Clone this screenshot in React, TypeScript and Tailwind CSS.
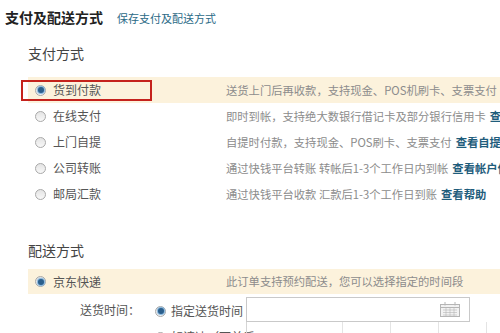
import React from "react";

interface PayOption {
  name: string;
  desc: string;
  link?: string;
  checked?: boolean;
}

const payOptions: PayOption[] = [
  { name: "货到付款", desc: "送货上门后再收款，支持现金、POS机刷卡、支票支付", checked: true },
  { name: "在线支付", desc: "即时到帐，支持绝大数银行借记卡及部分银行信用卡", link: "查看银行及限额" },
  { name: "上门自提", desc: "自提时付款，支持现金、POS刷卡、支票支付", link: "查看自提点" },
  { name: "公司转账", desc: "通过快钱平台转账 转帐后1-3个工作日内到帐", link: "查看帐户信息" },
  { name: "邮局汇款", desc: "通过快钱平台收款 汇款后1-3个工作日到账", link: "查看帮助" },
];

function Radio({ checked }: { checked?: boolean }) {
  return (
    <span className="flex h-[11px] w-[11px] shrink-0 items-center justify-center rounded-full border border-[#a9a9a9] bg-gradient-to-b from-[#e4e4e4] to-[#f8f8f8]">
      {checked && (
        <span className="h-[6px] w-[6px] rounded-full bg-[#2b5f8c] shadow-[0_0_1px_1px_#7fb2dc]" />
      )}
    </span>
  );
}

export default function App() {
  return (
    <div
      className="relative h-[333px] w-[500px] overflow-hidden bg-white text-[#555]"
      style={{ fontFamily: '"Noto Sans CJK SC", "Noto Sans", sans-serif' }}
    >
      {/* header */}
      <div className="flex items-baseline gap-[14px] pl-[5px] pt-[7px]">
        <h2 className="text-[14px] font-bold text-[#222]">支付及配送方式</h2>
        <a className="text-[11px] text-[#2b6a86]">保存支付及配送方式</a>
      </div>

      {/* payment */}
      <h3 className="mt-[15px] pl-[28px] text-[14px] leading-[20px] text-[#444]">支付方式</h3>
      <div className="mt-[14px] pl-[28px]">
        {payOptions.map((o) => (
          <div
            key={o.name}
            className={`flex h-[26px] items-center overflow-hidden whitespace-nowrap ${o.checked ? "bg-[#fcf2dc]" : ""}`}
          >
            <div className="flex w-[198px] shrink-0 items-center gap-[7px] pl-[7px] text-[12px] text-[#555]">
              <Radio checked={o.checked} />
              <span>{o.name}</span>
            </div>
            <span className="text-[11.3px] text-[#8c8c8c]">
              {o.desc}
              {o.link && <span className="ml-[4px] font-bold text-[#1f5d7c]">{o.link}</span>}
            </span>
          </div>
        ))}
      </div>

      {/* delivery */}
      <h3 className="mt-[33px] pl-[28px] text-[14px] leading-[20px] text-[#444]">配送方式</h3>
      <div className="mt-[9px] pl-[28px]">
        <div className="flex h-[25px] items-center whitespace-nowrap bg-[#fcf2dc]">
          <div className="flex w-[198px] shrink-0 items-center gap-[7px] pl-[7px] text-[12px] text-[#555]">
            <Radio checked />
            <span>京东快递</span>
          </div>
          <span className="text-[11.3px] text-[#8c8c8c]">此订单支持预约配送，您可以选择指定的时间段</span>
        </div>
        <div className="mt-[3px] flex whitespace-nowrap">
          <div className="w-[112px] shrink-0 pt-[4px] text-right text-[12px] text-[#555]">送货时间：</div>
          <div className="ml-[15px] flex w-[91px] shrink-0 flex-col gap-[8px] pt-[5px] text-[12px]">
            <div className="flex items-center gap-[5px]">
              <Radio checked />
              <span>指定送货时间</span>
            </div>
            <div className="flex items-center gap-[5px]">
              <Radio />
              <span>如请达（下单后</span>
            </div>
          </div>
          <div className="flex flex-col">
            <div className="flex h-[25px] w-[224px] items-center justify-end border border-[#c9c9c9] pr-[9px]">
              <svg width="20" height="15" viewBox="0 0 20 15" fill="none" stroke="#b5b5b5" strokeWidth="1">
                <rect x="0.5" y="2.5" width="19" height="12" fill="#f2f2f2" />
                <line x1="0.5" y1="5.5" x2="19.5" y2="5.5" />
                <line x1="5" y1="0" x2="5" y2="3.5" />
                <line x1="15" y1="0" x2="15" y2="3.5" />
                <path d="M3 8h14M3 10.5h14M3 13h14M6 6v8M10 6v8M14 6v8" strokeWidth="0.6" />
              </svg>
            </div>
            <div className="flex h-[20px] w-[260px] border-l border-[#d5d5d5]">
              <div className="w-[96px] border-r border-[#e4e4e4]" />
              <div className="w-[48px] border-r border-[#e4e4e4]" />
              <div className="w-[48px] border-r border-[#e4e4e4]" />
              <div className="w-[48px] border-r border-[#e4e4e4]" />
            </div>
          </div>
        </div>
      </div>

      {/* annotation box */}
      <div className="absolute left-[21px] top-[80px] h-[21px] w-[131px] border-2 border-[#c5221c]" />
    </div>
  );
}
